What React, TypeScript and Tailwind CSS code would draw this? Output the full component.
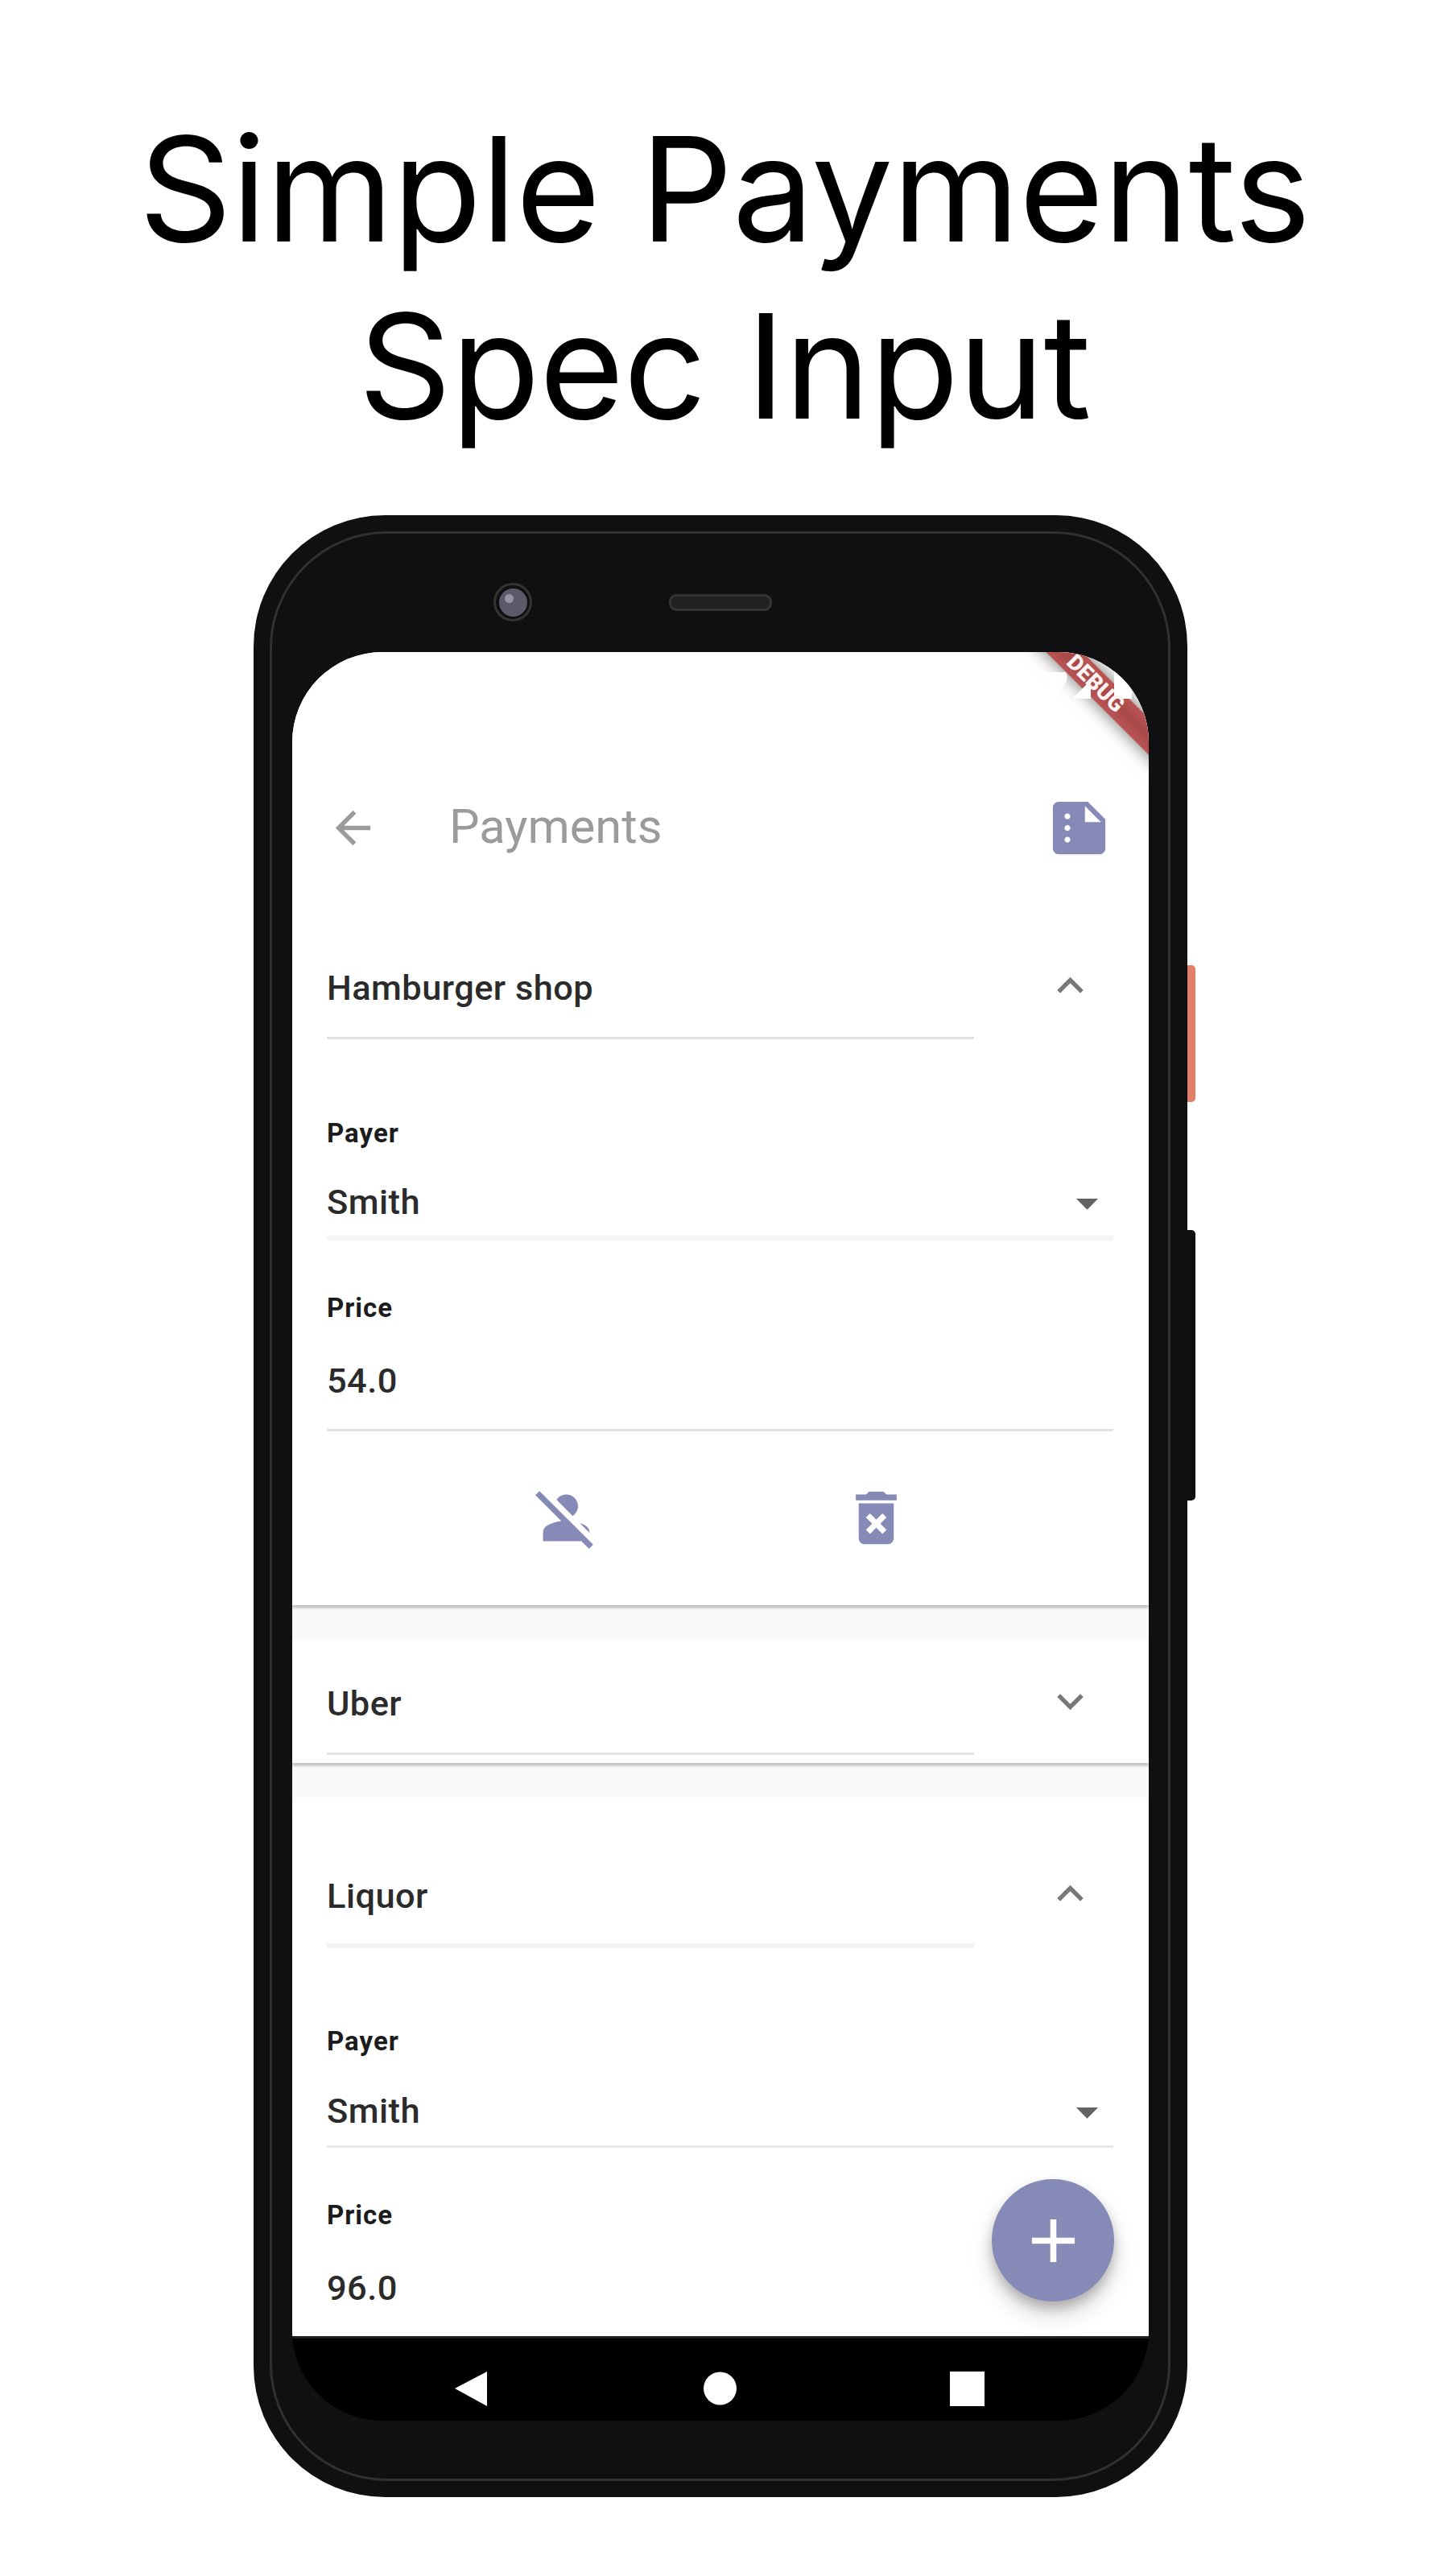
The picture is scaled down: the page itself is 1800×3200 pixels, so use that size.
import type { ReactNode } from "react";
import {
  MdAdd,
  MdArrowBack,
  MdArrowDropDown,
  MdDeleteForever,
  MdExpandLess,
  MdExpandMore,
  MdPersonOff,
  MdSummarize,
} from "react-icons/md";

const valueText = "text-[43.4px] leading-[52px] font-medium tracking-[0.45px] text-[#2b2b2b]";
const labelText = "text-[33px] leading-[40px] font-bold tracking-[1px] text-[#1c1c1c]";

function NameRow({ name, open, soft }: { name: string; open: boolean; soft?: boolean }) {
  const Chevron = open ? MdExpandLess : MdExpandMore;
  return (
    <div className="flex items-start">
      <div
        className={
          soft
            ? "w-[804px] border-b-[6px] border-[#f1f1f1] pt-[10px] pb-[32px]"
            : "w-[804px] border-b-[3px] border-[#e1e1e1] pt-[10px] pb-[34px]"
        }
      >
        <div className={valueText}>{name}</div>
      </div>
      <Chevron size={65} className="ml-[87px] text-[#787878]" />
    </div>
  );
}

function Fields({ payer, price, soft }: { payer: string; price: string; soft?: boolean }) {
  return (
    <>
      <div className={labelText}>Payer</div>
      <div
        className={
          soft
            ? "mt-[40px] flex items-center justify-between border-b-[6px] border-[#f4f4f4] pb-[15px]"
            : "mt-[41px] mb-[3px] flex items-center justify-between border-b-[3px] border-[#e8e8e8] pb-[16px]"
        }
      >
        <div className={valueText}>{payer}</div>
        <MdArrowDropDown size={65} className="-my-2 text-[#636363]" />
      </div>
      <div className={"mt-[64px] " + labelText}>Price</div>
      <div className="mt-[45px] border-b-[3px] border-[#e3e3e3] pb-[33px]">
        <div className={valueText}>{price}</div>
      </div>
    </>
  );
}

function Card({ children, className }: { children: ReactNode; className: string }) {
  return (
    <section
      className={
        "shrink-0 bg-white pr-[44px] pl-[43px] shadow-[0_4px_3px_rgba(0,0,0,0.14),0_3px_3px_rgba(0,0,0,0.1)] " +
        className
      }
    >
      {children}
    </section>
  );
}

function DebugBanner() {
  return (
    <div className="pointer-events-none absolute inset-0">
      <div className="absolute top-[37px] left-[897px] h-[32px] w-[230px] rotate-45 bg-linear-to-b from-[#bb5555] via-[#a84848] to-[#bb5555] shadow-[0_0_22px_rgba(0,0,0,0.55)]" />
      <svg className="absolute top-0 left-[906px]" width="158" height="158" viewBox="1270 809 158 158" fill="#fff">
        <path d="M1296 834h29q4 8-2 16l-11 12z" />
        <path d="M1333 867h23v-23z" />
        <path d="M1385 833h22v34h-22z" />
      </svg>
      <div className="absolute top-[23px] left-[938px] flex h-[32px] w-[120px] rotate-45 items-center justify-center text-[27.5px] leading-none font-black text-[#fdf3f3]">
        DEBUG
      </div>
    </div>
  );
}

function Screen() {
  return (
    <div className="relative ml-[25px] flex h-[2197px] w-[1064px] flex-col overflow-hidden rounded-[112px] bg-black font-[Roboto,sans-serif]">
      <div className="flex h-[2092px] flex-col overflow-hidden bg-[#fafafa]">
        <header className="flex h-[290px] shrink-0 items-center bg-white pt-[146px] pr-[43px] pl-[43px] text-[#9b9b9b]">
          <MdArrowBack size={65} />
          <h2 className="-mt-[3px] ml-[87px] flex-1 text-[59.6px] leading-[72px] font-normal">Payments</h2>
          <MdSummarize size={87} className="text-[#868ab7]" />
        </header>
        <Card className="h-[894px] pt-[92px]">
          <NameRow name="Hamburger shop" open />
          <div className="h-[97px]" />
          <Fields payer="Smith" price="54.0" soft />
          <div className="mt-[64px] flex justify-center gap-[298px] pl-[2px] text-[#868ab7]">
            <MdPersonOff size={87} />
            <MdDeleteForever size={87} />
          </div>
        </Card>
        <Card className="mt-[43px] h-[153px] pt-[44px]">
          <NameRow name="Uber" open={false} />
        </Card>
        <Card className="mt-[43px] h-[894px] pt-[87px]">
          <NameRow name="Liquor" open soft />
          <div className="h-[96px]" />
          <Fields payer="Smith" price="96.0" />
        </Card>
      </div>
      <nav className="flex h-[105px] border-t-[3px] border-[#222224] bg-black">
        <svg width="1064" height="102" viewBox="0 0 1064 102" fill="#fff">
          <path d="M202 62 242 41v43z" />
          <circle cx="531.5" cy="62" r="20.5" />
          <path d="M817 41h43v43h-43z" />
        </svg>
      </nav>
      <button className="absolute top-[1897px] left-[869px] flex size-[152px] items-center justify-center rounded-full bg-[#868ab7] text-white shadow-[0_16px_28px_rgba(0,0,0,0.17),0_8px_14px_rgba(0,0,0,0.2)]">
        <MdAdd size={91} />
      </button>
      <DebugBanner />
    </div>
  );
}

export default function App() {
  return (
    <main className="h-[3200px] w-[1800px] overflow-hidden bg-white">
      <h1 className="h-[640px] pt-[125px] text-center font-[Inter,sans-serif] text-[180.5px] leading-[220px] font-normal tracking-[-0.7px] text-black">
        Simple Payments
        <br />
        Spec Input
      </h1>
      <div className="ml-[315px] flex">
        <div className="h-[2462px] w-[1160px] rounded-[163px] bg-[#101012] p-[20px]">
          <div className="h-[2422px] w-[1119px] rounded-[145px] border-[3px] border-[#313131]">
            <div className="flex h-[147px] items-start pt-[61px] pl-[275px]">
              <div className="flex size-[48px] items-center justify-center rounded-full border-[3px] border-[#333333]">
                <div className="size-[35px] rounded-full bg-[#5b5a69] pt-[7px] pl-[7px]">
                  <div className="size-[11px] rounded-full bg-[#9695a6]" />
                </div>
              </div>
              <div className="mt-[14px] ml-[170px] h-[21px] w-[128px] rounded-[9px] border-[3px] border-[#343434] bg-[#222224]" />
            </div>
            <Screen />
          </div>
        </div>
        <div className="w-[10px]">
          <div className="mt-[559px] h-[170px] rounded-r-[5px] bg-[#e47f69]" />
          <div className="mt-[159px] h-[336px] rounded-r-[5px] bg-[#101012]" />
        </div>
      </div>
    </main>
  );
}
